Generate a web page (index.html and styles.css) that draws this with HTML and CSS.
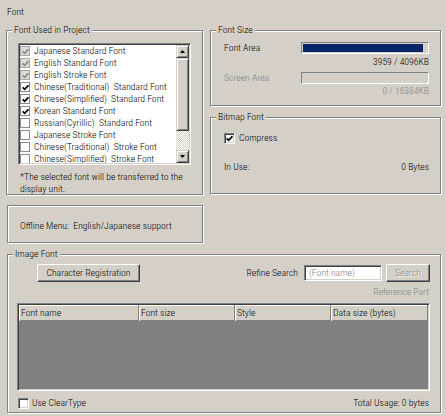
FILE: index.html
```html
<!DOCTYPE html>
<html>
<head>
<meta charset="utf-8">
<link rel="stylesheet" href="styles.css">
</head>
<body>
<div class="page">
  <div class="page-title">Font</div>

  <div class="top-row">
    <section class="group group-project">
      <div class="group-title">Font Used in Project</div>
      <div class="listbox">
        <ul class="font-list">
          <li class="item disabled"><span class="flatchk"><svg viewBox="0 0 7 7"><polyline points="0.6,3.3 2.6,5.3 6.4,1.3"/></svg></span>Japanese Standard Font</li>
          <li class="item disabled"><span class="flatchk"><svg viewBox="0 0 7 7"><polyline points="0.6,3.3 2.6,5.3 6.4,1.3"/></svg></span>English Standard Font</li>
          <li class="item disabled"><span class="flatchk"><svg viewBox="0 0 7 7"><polyline points="0.6,3.3 2.6,5.3 6.4,1.3"/></svg></span>English Stroke Font</li>
          <li class="item"><span class="flatchk"><svg viewBox="0 0 7 7"><polyline points="0.6,3.3 2.6,5.3 6.4,1.3"/></svg></span>Chinese(Traditional)&nbsp; Standard Font</li>
          <li class="item"><span class="flatchk"><svg viewBox="0 0 7 7"><polyline points="0.6,3.3 2.6,5.3 6.4,1.3"/></svg></span>Chinese(Simplified)&nbsp; Standard Font</li>
          <li class="item"><span class="flatchk"><svg viewBox="0 0 7 7"><polyline points="0.6,3.3 2.6,5.3 6.4,1.3"/></svg></span>Korean Standard Font</li>
          <li class="item"><span class="flatchk"></span>Russian(Cyrillic)&nbsp; Standard Font</li>
          <li class="item"><span class="flatchk"></span>Japanese Stroke Font</li>
          <li class="item"><span class="flatchk"></span>Chinese(Traditional)&nbsp; Stroke Font</li>
          <li class="item"><span class="flatchk"></span>Chinese(Simplified)&nbsp; Stroke Font</li>
        </ul>
        <div class="vscroll">
          <div class="sb-btn"><svg width="5" height="3" viewBox="0 0 5 3"><polygon points="0,3 2.5,0 5,3"/></svg></div>
          <div class="sb-thumb"></div>
          <div class="sb-track"></div>
          <div class="sb-btn"><svg width="5" height="3" viewBox="0 0 5 3"><polygon points="0,0 5,0 2.5,3"/></svg></div>
        </div>
      </div>
      <p class="note">*The selected font will be transferred to the<br>display unit.</p>
    </section>

    <div class="right-col">
      <section class="group group-size">
        <div class="group-title">Font Size</div>
        <div class="size-body">
          <div class="meter-row">
            <span class="meter-label">Font Area</span>
            <div class="meter"><div class="meter-fill" style="width:96.7%"></div></div>
          </div>
          <div class="meter-value">3959 / 4096KB</div>
          <div class="meter-row second disabled-text">
            <span class="meter-label">Screen Area</span>
            <div class="meter"></div>
          </div>
          <div class="meter-value second disabled-text">0 / 16384KB</div>
        </div>
      </section>

      <section class="group group-bitmap">
        <div class="group-title">Bitmap Font</div>
        <div class="bitmap-body">
          <div class="check-row">
            <span class="chk3d"><svg viewBox="0 0 7 7"><polyline points="0.6,3.3 2.6,5.3 6.4,1.3"/></svg></span>
            <span class="check-label">Compress</span>
          </div>
          <div class="info-row">
            <span>In Use:</span>
            <span>0 Bytes</span>
          </div>
        </div>
      </section>
    </div>
  </div>

  <section class="group group-offline">
    <div class="offline-text">Offline Menu:&nbsp; English/Japanese support</div>
  </section>

  <section class="group group-image">
    <div class="group-title">Image Font</div>
    <div class="image-body">
      <div class="toolbar">
        <button class="btn btn-register" type="button">Character Registration</button>
        <div class="search">
          <span class="search-label">Refine Search</span>
          <div class="textbox">(Font name)</div>
          <button class="btn btn-search" type="button" disabled>Search</button>
        </div>
      </div>
      <div class="ref-part disabled-text">Reference Part</div>
      <div class="listview">
        <div class="lv-header">
          <div class="lv-col">Font name</div>
          <div class="lv-col">Font size</div>
          <div class="lv-col">Style</div>
          <div class="lv-col">Data size (bytes)</div>
        </div>
        <div class="lv-body"></div>
      </div>
      <div class="bottom-row">
        <div class="check-row">
          <span class="chk3d empty"></span>
          <span class="check-label cleartype">Use ClearType</span>
        </div>
        <span class="total">Total Usage: 0 bytes</span>
      </div>
    </div>
  </section>
</div>
</body>
</html>
```
FILE: styles.css
```css
* { box-sizing: border-box; }

html, body {
  margin: 0;
  padding: 0;
  background: #d4d0c8;
}

body {
  width: 446px;
  height: 416px;
  overflow: hidden;
  font-family: "Roboto Condensed", "Liberation Sans", Arial, sans-serif;
  font-size: 9.7px;
  font-weight: 300;
  color: #000;
  line-height: 12px;
}

.page {
  padding: 6px 0 0 6px;
}

.page-title {
  height: 12px;
  margin-left: 1px;
}

.disabled-text { color: #808080; }

/* ---------- group boxes ---------- */
.group {
  border: 1px solid #808080;
  box-shadow: inset 1px 1px 0 #fff, 1px 1px 0 #fff;
}

.group-title {
  display: table;
  margin: -7px 0 -5px 5px;
  padding: 0 2px;
  height: 12px;
  background: #d4d0c8;
  position: relative;
}

.top-row {
  display: flex;
  gap: 7px;
  margin-top: 12px;
}

/* ---------- left group ---------- */
.group-project {
  width: 197px;
  height: 165px;
}

.listbox {
  display: flex;
  width: 173px;
  height: 122px;
  margin: 12px 0 0 11px;
  padding: 1px;
  background: #fff;
  border: 1px solid;
  border-color: #808080 #fff #fff #808080;
  box-shadow: inset 1px 1px 0 #404040, inset -1px -1px 0 #d4d0c8;
}

.font-list {
  list-style: none;
  margin: 0;
  padding: 0;
  flex: 1;
  overflow: hidden;
  background: #fff;
}

.item {
  display: flex;
  align-items: center;
  height: 12px;
  white-space: nowrap;
}

.flatchk {
  flex: none;
  width: 10px;
  height: 10px;
  margin-right: 4px;
  border: 1px solid #8c8c8c;
  background: #fff;
  display: flex;
  align-items: center;
  justify-content: center;
}

.flatchk svg, .chk3d svg {
  width: 7px;
  height: 7px;
  fill: none;
  stroke: #000;
  stroke-width: 1.7;
}

.item.disabled .flatchk {
  background: #dedcd6;
  border-color: #a8a8a8;
}

.item.disabled .flatchk svg {
  stroke: #8a8a8a;
}

.vscroll {
  flex: none;
  width: 13px;
  display: flex;
  flex-direction: column;
}

.sb-btn, .sb-thumb {
  background: #d4d0c8;
  border: 1px solid;
  border-color: #d4d0c8 #404040 #404040 #d4d0c8;
  box-shadow: inset 1px 1px 0 #fff, inset -1px -1px 0 #808080;
}

.sb-btn {
  height: 13px;
  display: flex;
  align-items: center;
  justify-content: center;
}

.sb-btn svg { fill: #000; }

.sb-thumb { height: 73px; }

.sb-track {
  flex: 1;
  background: repeating-conic-gradient(#fff 0 25%, #d4d0c8 0 50%) 0 0 / 2px 2px;
}

.note {
  margin: 6px 0 0 13px;
  line-height: 12px;
}

/* ---------- right column ---------- */
.right-col {
  display: flex;
  flex-direction: column;
  gap: 11px;
}

.group-size {
  width: 231px;
  height: 76px;
}

.size-body {
  padding: 11px 11px 0 13px;
}

.meter-row {
  display: flex;
  align-items: center;
  justify-content: space-between;
  height: 12px;
}

.meter-row.second { margin-top: 4px; }

.meter {
  width: 128px;
  height: 12px;
  padding: 1px;
  border: 1px solid;
  border-color: #808080 #fff #fff #808080;
}

.meter-fill {
  height: 100%;
  background: #0a246a;
}

.meter-value {
  margin-top: 2px;
  text-align: right;
  height: 12px;
}

.meter-value.second { margin-top: 1px; }

.group-bitmap {
  width: 231px;
  height: 77px;
}

.bitmap-body {
  padding: 14px 11px 0 13px;
}

.check-row {
  display: flex;
  align-items: center;
  height: 12px;
}

.chk3d {
  flex: none;
  width: 11px;
  height: 11px;
  background: #fff;
  border: 1px solid;
  border-color: #808080 #fff #fff #808080;
  box-shadow: inset 1px 1px 0 #404040, inset -1px -1px 0 #d4d0c8;
  display: flex;
  align-items: center;
  justify-content: center;
}

.check-label { margin-left: 4px; }

.info-row {
  display: flex;
  justify-content: space-between;
  margin-top: 17px;
  height: 12px;
}

/* ---------- offline ---------- */
.group-offline {
  width: 196px;
  height: 38px;
  margin: 10px 0 0 1px;
}

.offline-text {
  padding: 14px 0 0 12px;
}

/* ---------- image font ---------- */
.group-image {
  width: 434px;
  height: 159px;
  margin: 11px 0 0 1px;
}

.image-body {
  padding: 9px 10px 0 9px;
}

.toolbar {
  display: flex;
  align-items: center;
  justify-content: space-between;
  height: 18px;
}

.btn {
  font: inherit;
  color: #000;
  height: 18px;
  padding: 0;
  background: #d4d0c8;
  border: 1px solid;
  border-color: #fff #404040 #404040 #fff;
  box-shadow: inset -1px -1px 0 #808080;
  line-height: 14px;
}

.btn-register {
  width: 103px;
  margin-left: 20px;
}

.btn-search {
  width: 44px;
  color: #808080;
  text-shadow: 1px 1px 0 #fff;
}

.search {
  display: flex;
  align-items: center;
}

.search-label { margin-right: 6px; }

.textbox {
  width: 78px;
  height: 16px;
  margin-right: 4px;
  padding: 1px 0 0 4px;
  background: #fff;
  color: #808080;
  border: 1px solid;
  border-color: #808080 #fff #fff #808080;
  box-shadow: inset 1px 1px 0 #404040, inset -1px -1px 0 #d4d0c8;
  line-height: 12px;
}

.ref-part {
  margin-top: 4px;
  height: 12px;
  text-align: right;
  padding-right: 1px;
}

.listview {
  margin-top: 5px;
  height: 88px;
  display: flex;
  flex-direction: column;
  border: 1px solid;
  border-color: #808080 #fff #fff #808080;
  padding: 1px;
  box-shadow: inset 1px 1px 0 #404040, inset -1px -1px 0 #d4d0c8;
}

.lv-header {
  display: grid;
  grid-template-columns: 120px 96px 96px 1fr;
  height: 16px;
  flex: none;
}

.lv-col {
  padding: 2px 0 0 2px;
  background: #d4d0c8;
  border-right: 1px solid #808080;
  box-shadow: inset 1px 1px 0 #fff, inset 0 -1px 0 #808080;
  white-space: nowrap;
}

.lv-body {
  flex: 1;
  background: #808080;
}

.bottom-row {
  display: flex;
  justify-content: space-between;
  align-items: center;
  margin-top: 6px;
  height: 12px;
}

.bottom-row .chk3d { margin-left: 1px; }

.check-label.cleartype { margin-left: 3px; }

.total { padding-right: 1px; }
```
